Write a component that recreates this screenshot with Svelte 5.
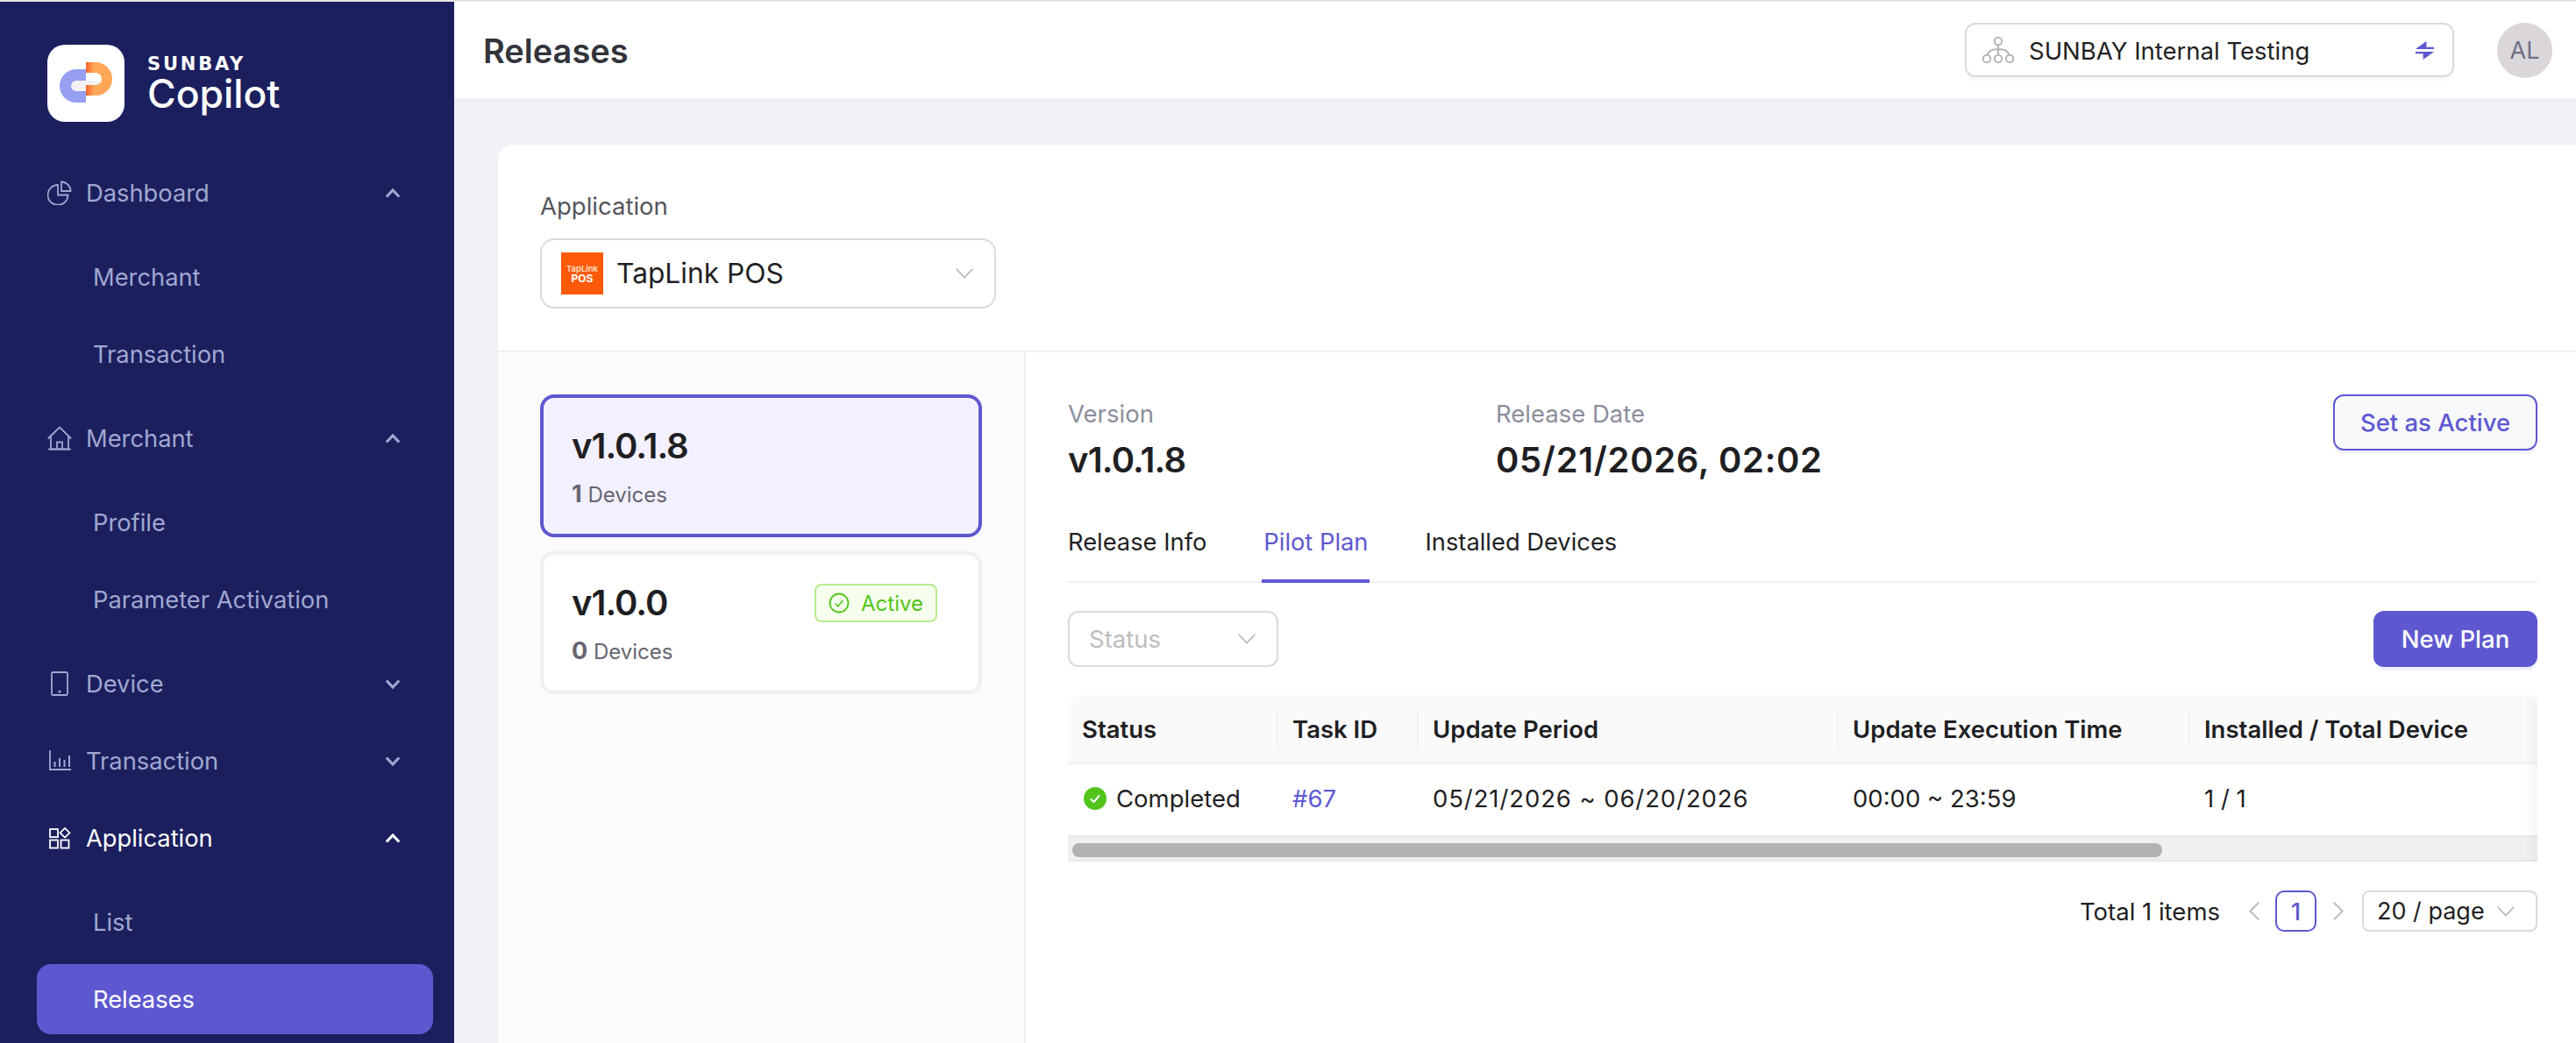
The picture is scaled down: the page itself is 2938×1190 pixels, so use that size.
<script lang="ts">
  const columns = [
    { label: 'Status', width: 238 },
    { label: 'Task ID', width: 160 },
    { label: 'Update Period', width: 479 },
    { label: 'Update Execution Time', width: 401 },
    { label: 'Installed / Total Device', width: 980 }
  ];

  const nav = [
    { label: 'Dashboard', icon: 'pie', open: true, children: ['Merchant', 'Transaction'] },
    { label: 'Merchant', icon: 'home', open: true, children: ['Profile', 'Parameter Activation'] },
    { label: 'Device', icon: 'tablet', open: false, children: [] },
    { label: 'Transaction', icon: 'bars', open: false, children: [] },
    { label: 'Application', icon: 'apps', open: true, current: true, children: ['List', 'Releases'] }
  ];

  const tabs = ['Release Info', 'Pilot Plan', 'Installed Devices'];
  let activeTab = $state('Pilot Plan');
</script>

{#snippet navIcon(name)}
  <svg class="nav-icon" viewBox="0 0 28 28" fill="none" stroke="currentColor" stroke-width="1.800">
    {#if name === 'pie'}
      <path d="M12 5A11.500 11.500 0 1 0 23.500 16.500H12z" />
      <path d="M16 1.500A10.500 10.500 0 0 1 26.500 12H16z" />
    {:else if name === 'home'}
      <path d="M.7 14.500 14 1.500l13.300 13" />
      <path d="M4 11.500V26.500h20V11.500" />
      <path d="M11 26.500v-8h6v8" />
      <path d="M1 26.500h26" />
    {:else if name === 'tablet'}
      <rect x="5" y="1" width="18" height="26" rx="1.500" />
      <circle cx="14" cy="23" r=".7" fill="currentColor" />
    {:else if name === 'bars'}
      <path d="M3 2v22h24" />
      <path d="M8.500 15v6M14 11v10M19.500 13v8M25 8v13" stroke-width="2" />
    {:else}
      <rect x="3" y="4" width="9" height="9" />
      <rect x="3" y="16.500" width="9" height="9" />
      <rect x="15.500" y="16.500" width="9" height="9" />
      <path d="m20 2.800 5.400 5.400-5.400 5.400-5.400-5.400z" />
    {/if}
  </svg>
{/snippet}

{#snippet chevron(cls, up = false)}
  <svg class={cls} viewBox="0 0 20 12" fill="none" stroke="currentColor">
    <path d={up ? 'M2 10.500 10 2l8 8.500' : 'M2 1.500 10 10l8-8.500'} />
  </svg>
{/snippet}

<div class="shell">
  <aside class="sidebar">
    <div class="brand">
      <div class="brand-mark">
        <svg viewBox="0 0 88 88" width="88" height="88">
          <defs>
            <linearGradient id="burn" x1="0" x2="1" y1="0" y2="0">
              <stop offset="0" stop-color="#f4622b" />
              <stop offset="1" stop-color="#ffa759" />
            </linearGradient>
          </defs>
          <rect x="24" y="41" width="38" height="12.500" rx="6" fill="#f2f2f2" />
          <path d="M44 34.500H33a12.500 12.500 0 0 0 0 25h11" fill="none" stroke="#979ff0" stroke-width="13" />
          <path d="M44 26h11a13 13 0 0 1 0 26H44" fill="none" stroke="#ffa759" stroke-width="12" />
          <rect x="44" y="20" width="9" height="12" fill="url(#burn)" />
          <rect x="44" y="46" width="9" height="12" fill="url(#burn)" />
        </svg>
      </div>
      <div class="brand-text">
        <div class="brand-top">SUNBAY</div>
        <div class="brand-name">Copilot</div>
      </div>
    </div>

    <nav class="nav">
      {#each nav as item}
        <div class="nav-row" class:current={item.current}>
          {@render navIcon(item.icon)}
          <span class="nav-label">{item.label}</span>
          {@render chevron('nav-chevron', item.open)}
        </div>
        {#if item.children.length}
          <div class="submenu">
            {#each item.children as child}
              <div class="sub-row" class:selected={item.current && child === 'Releases'}>{child}</div>
            {/each}
          </div>
        {/if}
      {/each}
    </nav>
  </aside>

  <div class="main">
    <header class="topbar">
      <h1>Releases</h1>
      <div class="topbar-right">
        <div class="org-select">
          <svg class="org-icon" viewBox="0 0 36 30" fill="none" stroke="#b5b5b5" stroke-width="2">
            <circle cx="18" cy="5" r="4.200" />
            <path d="M18 9.200V20M18 14c-7 0-11 1.500-12.500 6.500M18 14c7 0 11 1.500 12.500 6.500" />
            <circle cx="5" cy="25" r="4.200" />
            <circle cx="18" cy="25" r="4.200" />
            <circle cx="31" cy="25" r="4.200" />
          </svg>
          <span class="org-name">SUNBAY Internal Testing</span>
          <svg class="swap-icon" viewBox="0 0 24 24" fill="#5e58d0">
            <path d="M1 10.500 14 1v7h9v2.500z" />
            <path d="M23 13.500 10 23v-7H1v-2.500z" />
          </svg>
        </div>
        <div class="avatar">AL</div>
      </div>
    </header>

    <div class="content">
      <section class="card">
        <div class="app-picker">
          <div class="field-label">Application</div>
          <div class="app-select">
            <div class="app-logo">
              <span class="app-logo-top">TapLink</span>
              <span class="app-logo-bottom">POS</span>
            </div>
            <span class="app-name">TapLink POS</span>
            {@render chevron('app-chevron')}
          </div>
        </div>

        <div class="split">
          <div class="versions">
            <div class="version-card selected">
              <div class="version-name">v1.0.1.8</div>
              <div class="version-count"><b>1</b> Devices</div>
            </div>
            <div class="version-card">
              <div class="version-head">
                <div class="version-name">v1.0.0</div>
                <span class="active-tag">
                  <svg viewBox="0 0 24 24" width="24" height="24" fill="none" stroke="#52c41a" stroke-width="1.800">
                    <circle cx="12" cy="12" r="10.500" />
                    <path d="m7.500 12.500 3.200 3.300 5.800-6.800" stroke-width="1.500" />
                  </svg>
                  Active
                </span>
              </div>
              <div class="version-count"><b>0</b> Devices</div>
            </div>
          </div>

          <div class="detail">
            <div class="detail-head">
              <div class="meta meta-version">
                <div class="meta-label">Version</div>
                <div class="meta-value tight">v1.0.1.8</div>
              </div>
              <div class="meta">
                <div class="meta-label">Release Date</div>
                <div class="meta-value wide">05/21/2026, 02:02</div>
              </div>
              <button class="btn-outline" type="button">Set as Active</button>
            </div>

            <div class="tabs">
              {#each tabs as tab}
                <button class="tab" class:on={tab === activeTab} type="button" onclick={() => (activeTab = tab)}>{tab}</button>
              {/each}
            </div>

            <div class="toolbar">
              <div class="status-select">
                <span>Status</span>
                {@render chevron('status-chevron')}
              </div>
              <button class="btn-primary" type="button">New Plan</button>
            </div>

            <div class="table-wrap">
              <div class="table-scroll">
                <table>
                  <colgroup>
                    {#each columns as col}
                      <col style="width: {col.width}px" />
                    {/each}
                  </colgroup>
                  <thead>
                    <tr>
                      {#each columns as col}
                        <th><span class="th-inner">{col.label}</span></th>
                      {/each}
                    </tr>
                  </thead>
                  <tbody>
                    <tr>
                      <td>
                        <span class="status-cell">
                          <svg viewBox="0 0 26 26" width="26" height="26">
                            <circle cx="13" cy="13" r="13" fill="#52c41a" />
                            <path d="m8 13.500 3.500 3.500 6.500-7.500" fill="none" stroke="#fff" stroke-width="2" />
                          </svg>
                          Completed
                        </span>
                      </td>
                      <td class="task-link">#67</td>
                      <td class="period">05/21/2026 ~ 06/20/2026</td>
                      <td>00:00 ~ 23:59</td>
                      <td>1 / 1</td>
                    </tr>
                  </tbody>
                </table>
              </div>
              <div class="scrollbar"><div class="scrollbar-thumb"></div></div>
              <div class="edge-shadow"></div>
            </div>

            <div class="pagination">
              <span class="total">Total 1 items</span>
              <svg class="page-arrow prev" viewBox="0 0 12 20" fill="none" stroke="#bdbdbd" stroke-width="1.800"><path d="M10.500 1.500 2 10l8.500 8.500" /></svg>
              <span class="page-num">1</span>
              <svg class="page-arrow next" viewBox="0 0 12 20" fill="none" stroke="#bdbdbd" stroke-width="1.800"><path d="M1.500 1.500 10 10l-8.500 8.500" /></svg>
              <div class="page-size">
                <span>20 / page</span>
                {@render chevron('size-chevron')}
              </div>
            </div>
          </div>
        </div>
      </section>
    </div>
  </div>
</div>

<style>
  :global(body) {
    margin: 0;
    background: #f0f1f5;
    overflow: hidden;
    font-family: Inter, "Noto Sans", sans-serif;
    color: #1f1f23;
  }

  .shell {
    display: flex;
    height: 1190px;
    box-sizing: border-box;
    border-top: 2px solid #e6e6e1;
    overflow: hidden;
  }

  .sidebar {
    flex: 0 0 518px;
    background: #1c1f5e;
    overflow: hidden;
  }

  .brand {
    display: flex;
    align-items: center;
    gap: 27px;
    padding: 48px 0 0 54px;
    height: 130px;
    box-sizing: border-box;
  }

  .brand-mark {
    width: 88px;
    height: 88px;
    border-radius: 20px;
    background: #fff;
    flex: none;
    transform: translateY(4px);
  }

  .brand-text {
    color: #fff;
    margin-top: 9px;
    margin-left: -1px;
  }

  .brand-top {
    font-family: "DejaVu Sans", sans-serif;
    font-weight: 700;
    font-size: 21px;
    line-height: 22px;
    letter-spacing: 2.800px;
  }

  .brand-name {
    font-size: 44.500px;
    font-weight: 500;
    line-height: 46px;
  }

  .nav {
    display: flex;
    flex-direction: column;
    gap: 8px;
    padding: 48px 24px 0 42px;
    color: #a0a8d0;
    font-size: 27.300px;
  }

  .nav-row {
    display: flex;
    align-items: center;
    height: 80px;
    padding-left: 12px;
  }

  .nav-row.current {
    color: #fff;
  }

  .nav-icon {
    width: 28px;
    height: 28px;
    flex: none;
  }

  .nav-label {
    margin-left: 16px;
    flex: 1;
  }

  :global(.nav-chevron) {
    width: 18px;
    height: 11px;
    margin-right: 37px;
    stroke-width: 3.400;
  }

  .submenu {
    display: flex;
    flex-direction: column;
    gap: 8px;
    padding: 8px 0;
  }

  .sub-row {
    display: flex;
    align-items: center;
    height: 80px;
    padding-left: 64px;
    border-radius: 16px;
  }

  .sub-row.selected {
    background: #5e58d0;
    color: #fff;
  }

  .main {
    flex: 1;
    min-width: 0;
    display: flex;
    flex-direction: column;
  }

  .topbar {
    flex: 0 0 110px;
    box-sizing: border-box;
    background: #fff;
    display: flex;
    align-items: center;
    justify-content: space-between;
    padding: 0 27px 0 33px;
  }

  h1 {
    margin: 2px 0 0;
    font-size: 38px;
    font-weight: 600;
    color: #33343a;
  }

  .topbar-right {
    display: flex;
    align-items: center;
    gap: 49px;
  }

  .org-select {
    display: flex;
    align-items: center;
    width: 558px;
    height: 62px;
    box-sizing: border-box;
    padding: 0 20px 0 18px;
    background: #fff;
    border: 2px solid #dcdada;
    border-radius: 12px;
    box-shadow: 0 3px 4px rgba(0, 0, 0, 0.04);
  }

  .org-icon {
    width: 36px;
    height: 30px;
    flex: none;
  }

  .org-name {
    flex: 1;
    margin: 2px 0 0 17px;
    font-size: 27.500px;
  }

  .swap-icon {
    width: 23px;
    height: 23px;
    flex: none;
  }

  .avatar {
    width: 63px;
    height: 63px;
    border-radius: 50%;
    background: #dad6da;
    color: #6d7086;
    display: flex;
    align-items: center;
    justify-content: center;
    font-size: 27px;
  }

  .content {
    flex: 1;
    padding: 53px 0 0 50px;
    min-height: 0;
  }

  .card {
    background: #fff;
    border-radius: 16px 0 0 0;
    height: 100%;
    display: flex;
    flex-direction: column;
  }

  .app-picker {
    flex: 0 0 237px;
    box-sizing: border-box;
    padding: 52px 48px 0;
    border-bottom: 2px solid #f0f0f0;
  }

  .field-label {
    font-size: 27.500px;
    line-height: 36px;
    color: #55565c;
    margin-bottom: 19px;
  }

  .app-select {
    display: flex;
    align-items: center;
    width: 520px;
    height: 80px;
    box-sizing: border-box;
    padding: 0 22px;
    border: 2px solid #dcdada;
    border-radius: 16px;
  }

  .app-logo {
    width: 48px;
    height: 48px;
    background: #ff5a0a;
    color: #fff;
    display: flex;
    flex-direction: column;
    align-items: center;
    justify-content: center;
    flex: none;
  }

  .app-logo-top {
    font-size: 9.500px;
    line-height: 11px;
    font-weight: 600;
    color: #ffe0c8;
  }

  .app-logo-bottom {
    font-size: 12px;
    line-height: 12px;
    font-weight: 700;
  }

  .app-name {
    flex: 1;
    margin-left: 15px;
    margin-top: -2px;
    font-size: 31.700px;
  }

  :global(.app-chevron) {
    width: 24px;
    height: 14px;
    color: #b5b5b5;
    stroke-width: 1.400;
  }

  .split {
    flex: 1;
    display: flex;
    min-height: 0;
  }

  .versions {
    flex: 0 0 602px;
    box-sizing: border-box;
    padding: 48px 48px 0;
    background: #fbfbfb;
    border-right: 2px solid #f0f0f0;
    display: flex;
    flex-direction: column;
    gap: 16px;
  }

  .version-card {
    height: 163px;
    box-sizing: border-box;
    padding: 30px 32px;
    background: #fff;
    border: 4px solid #f0f0f0;
    border-radius: 16px;
  }

  .version-card.selected {
    background: #f3f0ff;
    border-color: #5e58d0;
  }

  .version-head {
    display: flex;
    align-items: flex-start;
    justify-content: space-between;
    padding-right: 15px;
  }

  .version-name {
    font-size: 40px;
    font-weight: 600;
    line-height: 50px;
    letter-spacing: -1px;
  }

  .version-count {
    margin-top: 15px;
    font-size: 24px;
    line-height: 30px;
    color: #666670;
  }

  .version-count b {
    font-weight: 700;
    font-size: 27px;
  }

  .active-tag {
    display: flex;
    align-items: center;
    gap: 13px;
    height: 44px;
    margin-top: 3px;
    box-sizing: border-box;
    padding: 0 14px;
    background: #f6ffed;
    border: 2px solid #b7eb8f;
    border-radius: 8px;
    color: #52c41a;
    font-size: 24px;
  }

  .detail {
    flex: 1;
    min-width: 0;
    padding: 52px 44px 0 48px;
  }

  .detail-head {
    display: flex;
    align-items: flex-start;
    height: 106px;
  }

  .meta-version {
    flex: 0 0 488px;
  }

  .meta-label {
    font-size: 27.500px;
    line-height: 36px;
    color: #8c8e9b;
  }

  .meta-value {
    margin-top: 10px;
    font-size: 40px;
    line-height: 50px;
    font-weight: 600;
  }

  .meta-value.tight {
    letter-spacing: -0.800px;
  }

  .meta-value.wide {
    letter-spacing: 0.650px;
  }

  .btn-outline,
  .btn-primary {
    height: 64px;
    border-radius: 12px;
    font: inherit;
    font-size: 27.500px;
    font-weight: 500;
    box-sizing: border-box;
  }

  .btn-outline {
    margin-left: auto;
    width: 233px;
    margin-top: -4px;
    border: 2px solid #5e58d0;
    color: #5e58d0;
    background: #f8f9fb;
    box-shadow: 0 4px 0 rgba(94, 88, 208, 0.07);
  }

  .btn-primary {
    width: 187px;
    border: 0;
    background: #5e58d0;
    color: #fff;
    box-shadow: 0 4px 0 rgba(94, 88, 208, 0.08);
  }

  .tabs {
    display: flex;
    gap: 63px;
    height: 105px;
    box-sizing: border-box;
    padding-top: 36px;
    border-bottom: 2px solid #f0f0f0;
  }

  .tab {
    height: 69px;
    padding: 0 0 20px;
    border: 0;
    background: none;
    font: inherit;
    font-size: 27.300px;
    color: #1f1f23;
    box-sizing: border-box;
    border-bottom: 4px solid transparent;
  }

  .tab.on {
    padding: 0 2px 20px;
    color: #5e58d0;
    border-bottom-color: #5e58d0;
  }

  .toolbar {
    display: flex;
    justify-content: space-between;
    margin-top: 32px;
  }

  .status-select {
    display: flex;
    align-items: center;
    justify-content: space-between;
    width: 240px;
    height: 64px;
    box-sizing: border-box;
    padding: 0 22px;
    border: 2px solid #dcdada;
    border-radius: 12px;
    color: #bdbdbd;
    font-size: 27.500px;
  }

  :global(.status-chevron) {
    width: 24px;
    height: 14px;
    color: #b5b5b5;
    stroke-width: 1.400;
  }

  .table-wrap {
    position: relative;
    margin-top: 32px;
  }

  .table-scroll {
    overflow: hidden;
    border-radius: 16px 16px 0 0;
  }

  table {
    width: 2258px;
    table-layout: fixed;
    border-collapse: collapse;
    font-size: 27.500px;
  }

  th {
    height: 77px;
    padding: 0;
    background: #fafafa;
    border-bottom: 2px solid #f0f0f0;
    text-align: left;
    font-weight: 600;
  }

  .th-inner {
    display: flex;
    align-items: center;
    height: 45px;
    padding-left: 16px;
    border-left: 2px solid #f0f0f0;
  }

  th:first-child .th-inner {
    border-left: 0;
  }

  td {
    height: 82px;
    padding: 0 0 4px 18px;
    box-sizing: border-box;
  }

  .period {
    letter-spacing: 0.900px;
  }

  .task-link {
    color: #5e58d0;
  }

  .status-cell {
    display: flex;
    align-items: center;
    gap: 11px;
  }

  .scrollbar {
    height: 30px;
    box-sizing: border-box;
    background: #f0f0f0;
    border-top: 2px solid #e8e8e8;
    border-bottom: 2px solid #e8e8e8;
    padding: 7px 0 0 5px;
  }

  .scrollbar-thumb {
    width: 1243px;
    height: 16px;
    border-radius: 8px;
    background: #b2b2b2;
  }

  .edge-shadow {
    position: absolute;
    top: 0;
    right: 0;
    bottom: 0;
    width: 14px;
    background: linear-gradient(to right, rgba(0, 0, 0, 0), rgba(0, 0, 0, 0.035));
  }

  .pagination {
    display: flex;
    align-items: center;
    justify-content: flex-end;
    margin-top: 33px;
    font-size: 27.500px;
  }

  .page-arrow {
    width: 14px;
    height: 23px;
  }

  .page-arrow.prev {
    margin-left: 32px;
    margin-right: 17px;
  }

  .page-arrow.next {
    margin-left: 18px;
    margin-right: 20px;
  }

  .page-num {
    width: 47px;
    height: 47px;
    box-sizing: border-box;
    border: 2px solid #5e58d0;
    border-radius: 10px;
    color: #5e58d0;
    display: flex;
    align-items: center;
    justify-content: center;
    font-weight: 500;
  }

  .page-size {
    display: flex;
    align-items: center;
    justify-content: space-between;
    width: 200px;
    height: 47px;
    box-sizing: border-box;
    padding: 0 22px 0 15px;
    border: 2px solid #dcdada;
    border-radius: 8px;
    font-size: 27px;
  }

  :global(.size-chevron) {
    width: 24px;
    height: 14px;
    color: #b5b5b5;
    stroke-width: 1.400;
  }
</style>
